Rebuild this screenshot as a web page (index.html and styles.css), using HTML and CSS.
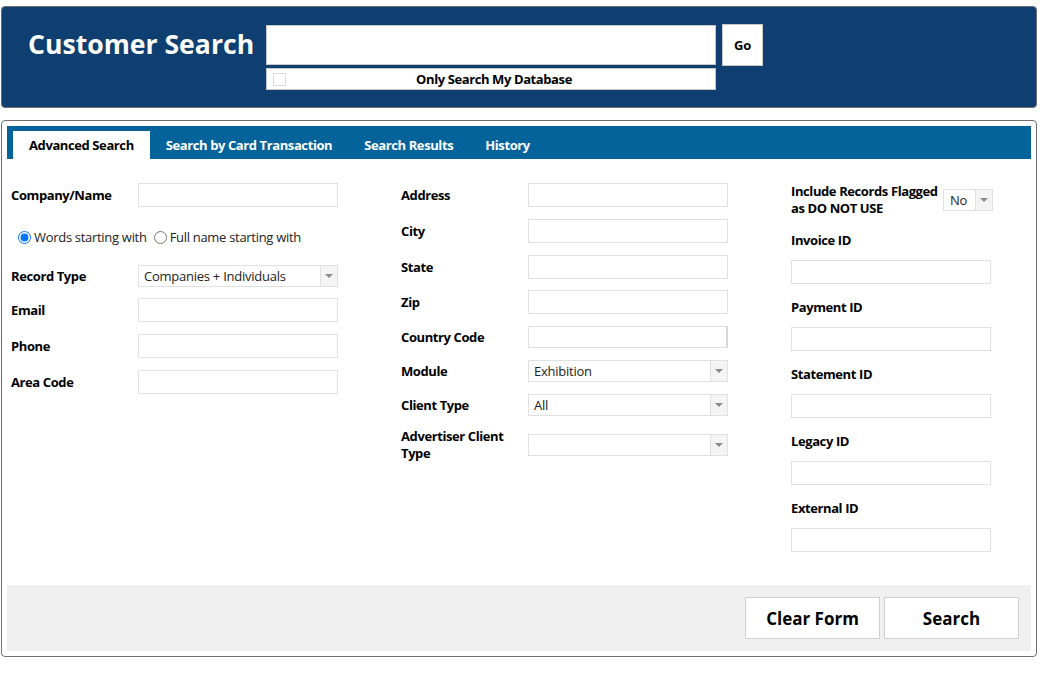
FILE: index.html
```html
<!DOCTYPE html>
<html lang="en">
<head>
<meta charset="utf-8">
<title>Customer Search</title>
<link rel="stylesheet" href="styles.css">
</head>
<body>
<div class="page">
  <header class="hero">
    <h1 class="hero-title">Customer Search</h1>
    <div class="quick">
      <div class="quick-row">
        <input class="quick-input" type="text">
        <button class="go" type="button">Go</button>
      </div>
      <div class="only-db">
        <span class="cb"></span>
        <span class="only-db-text">Only Search My Database</span>
      </div>
    </div>
  </header>

  <section class="panel">
    <nav class="tabs">
      <span class="tab active">Advanced Search</span>
      <span class="tab">Search by Card Transaction</span>
      <span class="tab">Search Results</span>
      <span class="tab">History</span>
    </nav>

    <div class="form">
      <div class="col col1">
        <div class="row r24 mb12"><span class="lbl">Company/Name</span><span class="inp"></span></div>
        <div class="radios">
          <label class="radio"><input type="radio" name="m" checked><span>Words starting with</span></label>
          <label class="radio"><input type="radio" name="m"><span>Full name starting with</span></label>
        </div>
        <div class="row r22 mb11"><span class="lbl">Record Type</span><span class="sel"><span class="sel-val">Companies + Individuals</span><span class="sel-arrow"></span></span></div>
        <div class="row r24 mb12"><span class="lbl">Email</span><span class="inp"></span></div>
        <div class="row r24 mb12"><span class="lbl">Phone</span><span class="inp"></span></div>
        <div class="row r24"><span class="lbl">Area Code</span><span class="inp"></span></div>
      </div>

      <div class="col col2">
        <div class="row r24 mb12"><span class="lbl">Address</span><span class="inp"></span></div>
        <div class="row r24 mb12"><span class="lbl">City</span><span class="inp"></span></div>
        <div class="row r24 mb11"><span class="lbl">State</span><span class="inp"></span></div>
        <div class="row r24 mb12"><span class="lbl">Zip</span><span class="inp"></span></div>
        <div class="row r22 mb12"><span class="lbl">Country Code</span><span class="inp inp-num"></span></div>
        <div class="row r22 mb12"><span class="lbl">Module</span><span class="sel"><span class="sel-val">Exhibition</span><span class="sel-arrow"></span></span></div>
        <div class="row r22 mb12"><span class="lbl">Client Type</span><span class="sel"><span class="sel-val">All</span><span class="sel-arrow"></span></span></div>
        <div class="row"><span class="lbl two">Advertiser Client Type</span><span class="sel"><span class="sel-val"></span><span class="sel-arrow"></span></span></div>
      </div>

      <div class="col col3">
        <div class="flag-row">
          <span class="lbl flag-lbl">Include Records Flagged as DO NOT USE</span>
          <span class="sel sel-small"><span class="sel-val">No</span><span class="sel-arrow"></span></span>
        </div>
        <div class="stack"><span class="lbl stack-lbl">Invoice ID</span><span class="inp"></span></div>
        <div class="stack"><span class="lbl stack-lbl">Payment ID</span><span class="inp"></span></div>
        <div class="stack"><span class="lbl stack-lbl">Statement ID</span><span class="inp"></span></div>
        <div class="stack"><span class="lbl stack-lbl">Legacy ID</span><span class="inp"></span></div>
        <div class="stack last"><span class="lbl stack-lbl">External ID</span><span class="inp"></span></div>
      </div>
    </div>

    <div class="actions">
      <button class="btn" type="button">Clear Form</button>
      <button class="btn" type="button">Search</button>
    </div>
  </section>
</div>
</body>
</html>
```

FILE: styles.css
```css
* { box-sizing: border-box; }

body {
  margin: 0;
  font-family: "Open Sans", "Noto Sans", sans-serif;
  color: #000;
  background: #fff;
}

.page {
  padding: 6px 18px 0 1px;
}

/* Header */
.hero {
  height: 102px;
  border: 1px solid #6e6e6e;
  border-radius: 4px;
  background: #0f3f70;
  display: flex;
  align-items: flex-start;
  padding: 17px 0 0 26px;
}

.hero-title {
  margin: 0;
  width: 238px;
  flex: none;
  color: #fff;
  font-size: 26.6px;
  font-weight: 700;
  line-height: 41px;
}

.quick {
  display: flex;
  flex-direction: column;
}

.quick-row {
  display: flex;
  align-items: center;
  height: 42px;
}

.quick-input {
  width: 450px;
  height: 40px;
  margin: 0;
  border: 1px solid #c8c8c8;
  background: #fff;
  outline: none;
}

.go {
  width: 41px;
  height: 42px;
  margin: 0 0 0 6px;
  padding: 0;
  border: 1px solid #c8c8c8;
  background: #fff;
  font-family: inherit;
  font-size: 13px;
  font-weight: 700;
  letter-spacing: -0.2px;
  color: #000;
}

.only-db {
  margin-top: 2px;
  width: 450px;
  height: 22px;
  border: 1px solid #c8c8c8;
  background: #fff;
  display: grid;
  grid-template-columns: 1fr auto 1fr;
  align-items: center;
  padding-left: 6px;
}

.cb {
  width: 13px;
  height: 13px;
  border: 1px solid #dcdcdc;
  background: #fff;
}

.only-db-text {
  font-size: 13px;
  font-weight: 700;
  line-height: 20px;
  letter-spacing: -0.4px;
}

/* Panel */
.panel {
  margin-top: 12px;
  border: 1px solid #6e6e6e;
  border-radius: 4px;
  padding: 5px;
}

.tabs {
  height: 33px;
  background: #04639a;
  display: flex;
  align-items: flex-end;
  padding-left: 6px;
}

.tab {
  height: 28px;
  line-height: 28px;
  padding: 0 16px;
  color: #fff;
  font-size: 13px;
  font-weight: 700;
  letter-spacing: -0.4px;
  white-space: nowrap;
}

.tab.active {
  background: #fff;
  color: #000;
}

/* Form */
.form {
  display: grid;
  grid-template-columns: 327px 327px 202px;
  column-gap: 63px;
  align-items: start;
  padding: 24px 4px 33px;
}

.col {
  display: flex;
  flex-direction: column;
}

.row {
  display: flex;
  align-items: center;
}

.r24 { height: 24px; }
.r22 { height: 22px; }
.mb11 { margin-bottom: 11px; }
.mb12 { margin-bottom: 12px; }

.lbl {
  font-size: 13px;
  font-weight: 700;
  line-height: 17px;
  letter-spacing: -0.4px;
}

.row .lbl {
  width: 127px;
  flex: none;
}

.lbl.two {
  width: 110px;
  margin-right: 17px;
}

.inp {
  display: block;
  width: 200px;
  height: 24px;
  border: 1px solid #e1e1e1;
  background: #fff;
}

.r22 .inp { height: 22px; }

.inp-num {
  border-right: 2px solid #d6d6d6;
}

.sel {
  display: flex;
  width: 200px;
  height: 22px;
  border: 1px solid #e1e1e1;
  background: #fff;
}

.sel-val {
  flex: 1;
  padding-left: 5px;
  font-size: 13px;
  line-height: 20px;
  letter-spacing: -0.25px;
  color: #222;
  white-space: nowrap;
  overflow: hidden;
}

.sel-arrow {
  width: 17px;
  flex: none;
  border-left: 1px solid #e1e1e1;
  background: #f4f4f4;
  display: flex;
  align-items: center;
  justify-content: center;
}

.sel-arrow::before {
  content: "";
  border-left: 4px solid transparent;
  border-right: 4px solid transparent;
  border-top: 4px solid #8a8a8a;
}

.radios {
  height: 36px;
  margin-bottom: 10px;
  display: flex;
  align-items: center;
  padding-left: 6px;
  gap: 6px;
}

.radio {
  display: flex;
  align-items: center;
  font-size: 13px;
  letter-spacing: -0.3px;
  color: #222;
}

.radio input {
  width: 13px;
  height: 13px;
  margin: 0 3px 0 1px;
}

.flag-row {
  display: flex;
  align-items: center;
  margin-bottom: 13px;
}

.flag-lbl {
  width: 152px;
  flex: none;
}

.sel-small {
  width: 50px;
}

.sel-small .sel-val {
  padding-left: 6px;
}

.stack {
  display: flex;
  flex-direction: column;
  margin-bottom: 13px;
}

.stack.last { margin-bottom: 0; }

.stack-lbl {
  line-height: 20px;
  margin-bottom: 10px;
}

/* Actions */
.actions {
  height: 66px;
  background: #f0f0f0;
  display: flex;
  justify-content: flex-end;
  align-items: center;
  gap: 4px;
  padding-right: 12px;
}

.btn {
  width: 135px;
  height: 42px;
  margin: 0;
  border: 1px solid #cfcfcf;
  background: #fff;
  font-family: inherit;
  font-size: 17px;
  font-weight: 700;
  color: #000;
}
```
